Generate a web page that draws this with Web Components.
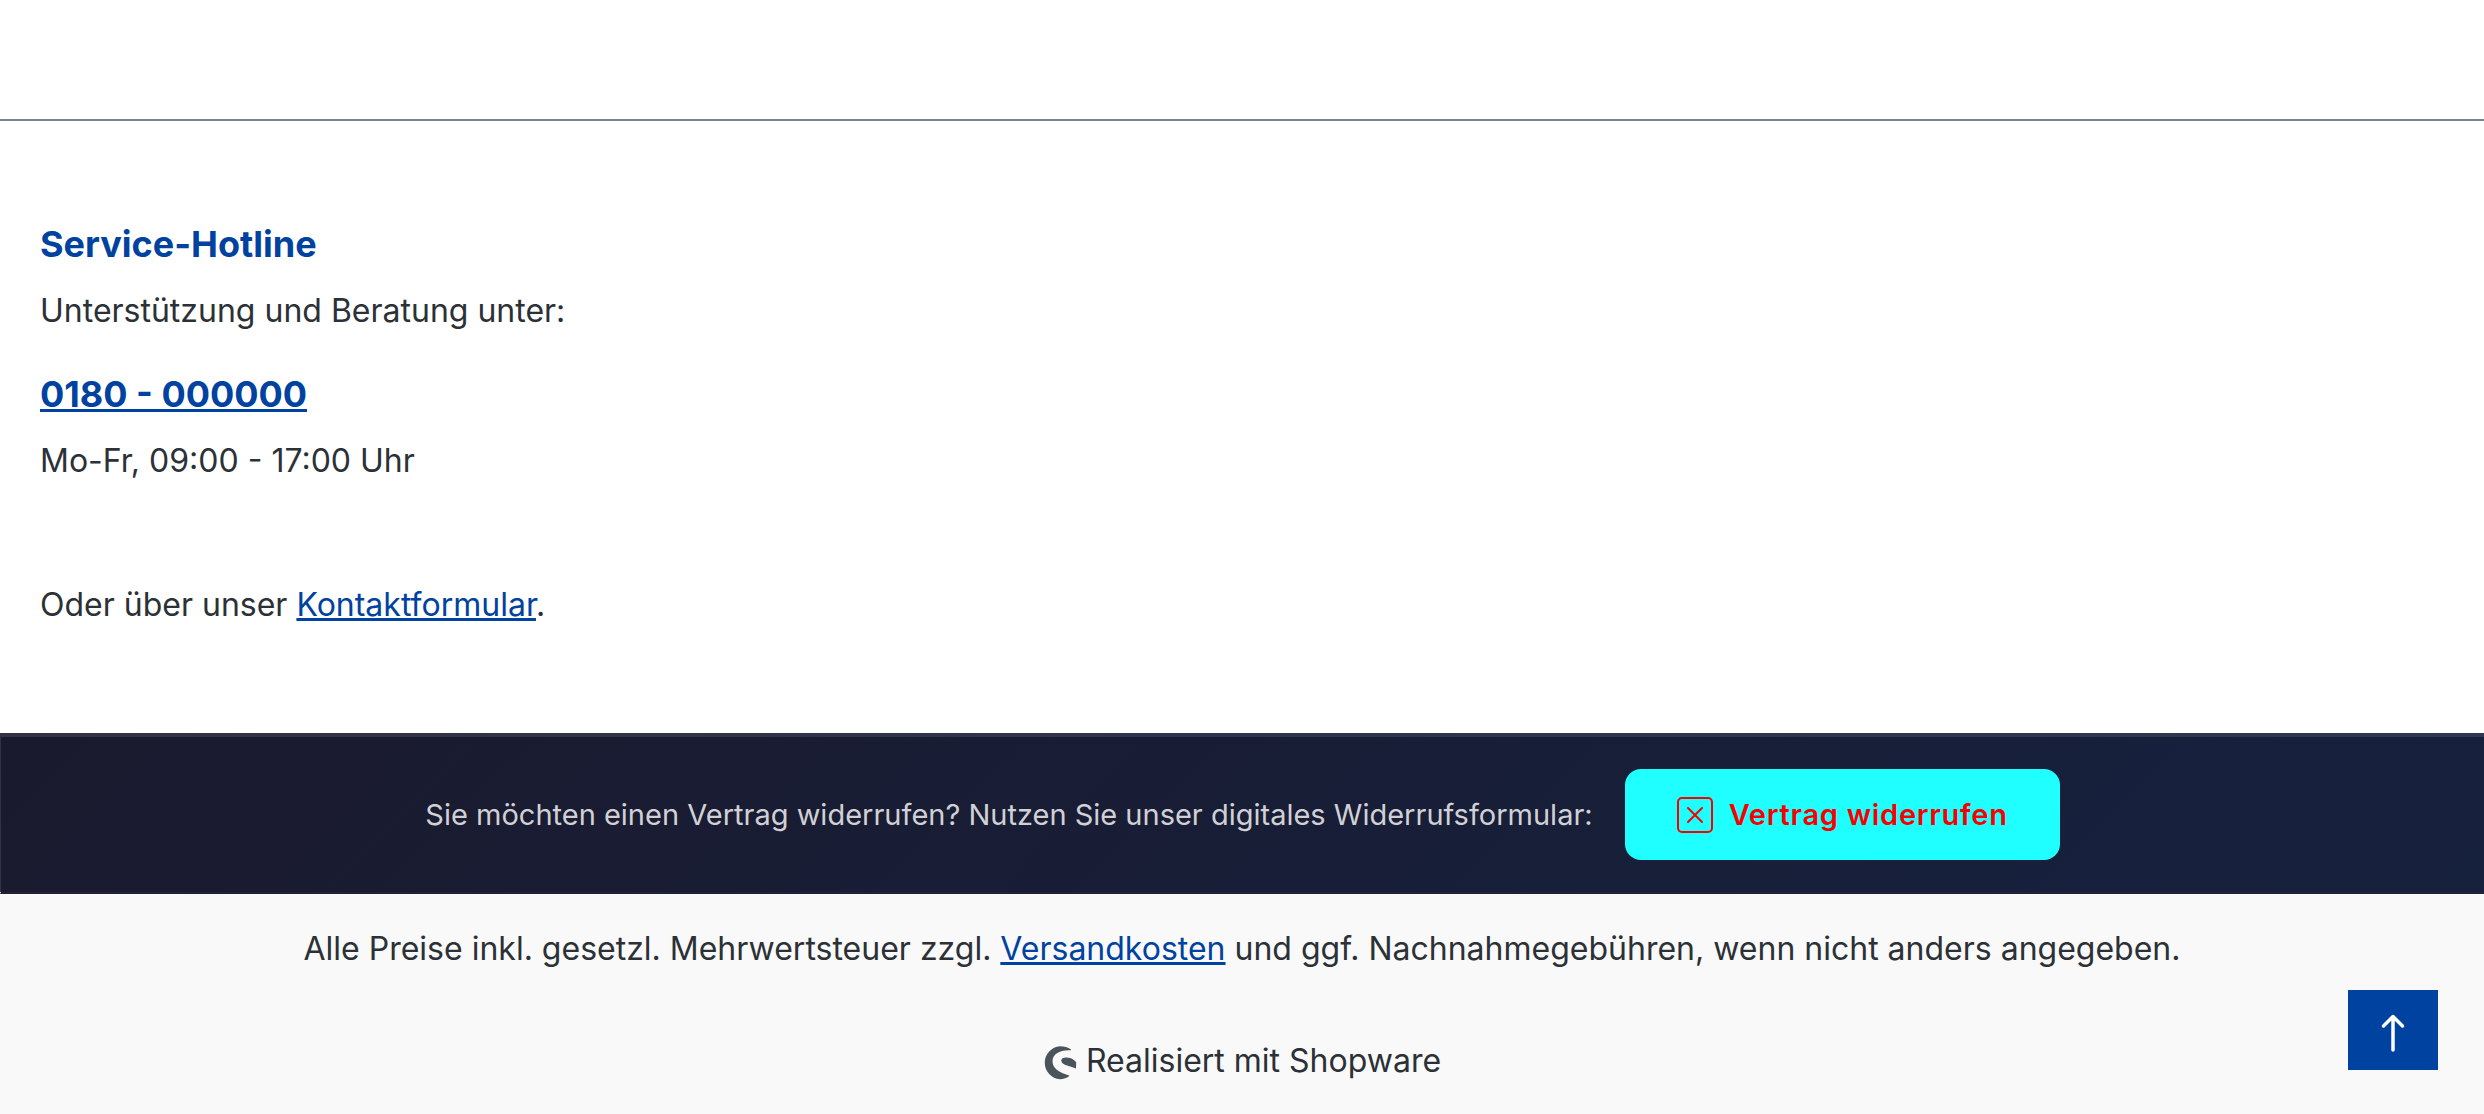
<!DOCTYPE html>
<html lang="de">
<head>
<meta charset="utf-8">
<meta name="viewport" content="width=device-width, initial-scale=1">
<title>Service-Hotline</title>
<style>
  html, body { margin: 0; }
  body {
    background: #fff;
    color: #2b3136;
    font: 32px/48px Inter, "Liberation Sans", sans-serif;
    --brand: #0042a0;
  }
</style>
</head>
<body>
<shop-footer>
  <service-hotline phone="0180 - 000000" hours="Mo-Fr, 09:00 - 17:00 Uhr"></service-hotline>
  <withdrawal-bar>Sie möchten einen Vertrag widerrufen? Nutzen Sie unser digitales Widerrufsformular:</withdrawal-bar>
  <footer-bottom></footer-bottom>
</shop-footer>
<scroll-up></scroll-up>

<script>
const define = (name, html) => {
  const template = document.createElement('template');
  template.innerHTML = html;
  customElements.define(name, class extends HTMLElement {
    constructor() {
      super();
      this.attachShadow({ mode: 'open' }).append(template.content.cloneNode(true));
    }
    connectedCallback() {
      this.shadowRoot.querySelectorAll('[data-attr]').forEach(el => {
        el.textContent = this.getAttribute(el.dataset.attr);
      });
    }
  });
};

define('shop-footer', `
  <style>
    :host { display: block; padding-top: 119px; }
    footer { border-top: 2px solid #798490; }
  </style>
  <footer><slot></slot></footer>`);

define('service-hotline', `
  <style>
    :host { display: block; padding: 96px 40px 104px; }
    h2, p { margin: 0; }
    h2, .phone { font-size: 36px; line-height: 54px; font-weight: 700; color: var(--brand); }
    h2 { margin-bottom: 16px; }
    .phone { display: block; width: fit-content; margin: 32px 0 16px; }
    .contact { margin-top: 96px; }
    a { color: var(--brand); }
  </style>
  <h2>Service-Hotline</h2>
  <p>Unterstützung und Beratung unter:</p>
  <a class="phone" href="tel:0180000000" data-attr="phone"></a>
  <p data-attr="hours"></p>
  <p class="contact">Oder über unser <a href="#kontakt">Kontaktformular</a>.</p>`);

define('withdrawal-bar', `
  <style>
    :host {
      display: flex; flex-wrap: wrap; align-items: center; justify-content: center; gap: 32px;
      padding: 32px;
      border: solid rgba(255,255,255,.1); border-width: 4px 0 0 1px;
      border-bottom: 2px solid #22213a;
      background: linear-gradient(135deg, #1a1a2e, #16213e) border-box;
      color: #d1d1d5; font-size: 29px; line-height: 43px;
    }
    p { margin: 0; }
    button {
      display: inline-flex; align-items: center; gap: 16px;
      padding: 24px 52px; border: 0; border-radius: 16px;
      background: #20ffff; color: #f80000;
      font: 600 29px/43px Inter, "Liberation Sans", sans-serif; letter-spacing: .025em;
    }
    svg { width: 36px; height: 36px; }
  </style>
  <p><slot></slot></p>
  <button type="button">
    <svg viewBox="0 0 36 36" fill="none" stroke="currentColor" stroke-width="2" aria-hidden="true">
      <rect x="1" y="1" width="34" height="34" rx="4"/>
      <path d="M11 11 25 25M25 11 11 25" stroke-linecap="round"/>
    </svg>Vertrag widerrufen
  </button>`);

define('footer-bottom', `
  <style>
    :host { display: flex; flex-direction: column; align-items: center; gap: 64px; padding: 31px 40px 29px; background: #f9f9f9; text-align: center; }
    p { margin: 0; }
    a { color: var(--brand); }
    svg { width: 34px; height: 34px; vertical-align: -8px; color: #4a545b; }
  </style>
  <p>Alle Preise inkl. gesetzl. Mehrwertsteuer zzgl. <a href="#versand">Versandkosten</a> und ggf. Nachnahmegebühren, wenn nicht anders angegeben.</p>
  <p><svg viewBox="0 0 34 34" fill="currentColor" aria-hidden="true">
    <path d="M28 3.6C25 1.2 21 .3 17 .3A16.500 16.500 0 0 0 17 33.200C20.500 33.200 24 32 26.700 29.800C20 27.200 9.500 24.500 9.500 15C9.500 8 17 3.500 28 4.200Z"/>
    <path d="M33 22.500C28 20 19 19.500 18.300 15C18 11 24 11 27 12C30 13 32 14.500 33.200 16.500Z"/>
  </svg> Realisiert mit Shopware</p>`);

define('scroll-up', `
  <style>
    :host { display: block; position: fixed; right: 46px; bottom: 44px; }
    button { display: grid; place-items: center; width: 90px; height: 80px; padding: 0; border: 0; background: var(--brand); color: #fff; }
    svg { width: 44px; height: 44px; }
  </style>
  <button type="button" aria-label="Nach oben">
    <svg viewBox="0 0 44 44" fill="none" stroke="currentColor" stroke-width="3.5" stroke-linecap="round" stroke-linejoin="round" aria-hidden="true">
      <path d="M22 42V8.500M12.500 18 22 8.500 31.500 18"/>
    </svg>
  </button>`);
</script>
</body>
</html>
